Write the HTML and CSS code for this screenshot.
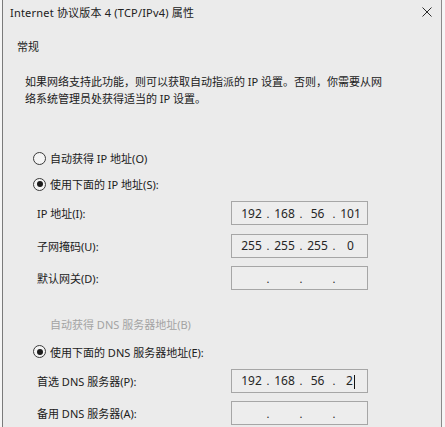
FILE: index.html
```html
<!DOCTYPE html>
<html lang="zh-CN">
  <head>
    <meta charset="utf-8">
    <title>Internet 协议版本 4 (TCP/IPv4) 属性</title>
    <link rel="stylesheet" href="styles.css">
  </head>
  <body>
    <div class="window">
      <div class="titlebar">
        <span class="title">Internet 协议版本 4 (TCP/IPv4) 属性</span>
        <svg class="close" width="10" height="10" viewBox="0 0 10 10">
          <path d="M0.5 0.5 L9.5 9.5 M9.5 0.5 L0.5 9.5" stroke="#2b2b2b" stroke-width="1" fill="none" />
        </svg>
      </div>

      <div class="tab">常规</div>

      <p class="intro">如果网络支持此功能，则可以获取自动指派的 IP 设置。否则，你需要从网<br>络系统管理员处获得适当的 IP 设置。</p>

      <div class="radio-row first">
        <span class="radio"></span>
        <span>自动获得 IP 地址(O)</span>
      </div>
      <div class="radio-row">
        <span class="radio checked"></span>
        <span>使用下面的 IP 地址(S):</span>
      </div>

      <div class="fields">
        <span>IP 地址(I):</span>
        <div class="ipbox">
          <span>192</span><span class="dot">.</span><span>168</span><span class="dot">.</span><span>56</span><span class="dot">.</span><span>101</span>
        </div>
        <span>子网掩码(U):</span>
        <div class="ipbox">
          <span>255</span><span class="dot">.</span><span>255</span><span class="dot">.</span><span>255</span><span class="dot">.</span><span>0</span>
        </div>
        <span>默认网关(D):</span>
        <div class="ipbox">
          <span></span><span class="dot">.</span><span></span><span class="dot">.</span><span></span><span class="dot">.</span><span></span>
        </div>
      </div>

      <div class="radio-row disabled">
        <span class="radio hidden"></span>
        <span>自动获得 DNS 服务器地址(B)</span>
      </div>
      <div class="radio-row">
        <span class="radio checked"></span>
        <span>使用下面的 DNS 服务器地址(E):</span>
      </div>

      <div class="fields">
        <span>首选 DNS 服务器(P):</span>
        <div class="ipbox">
          <span>192</span><span class="dot">.</span><span>168</span><span class="dot">.</span><span>56</span><span class="dot">.</span><span>2<i class="caret"></i></span>
        </div>
        <span>备用 DNS 服务器(A):</span>
        <div class="ipbox">
          <span></span><span class="dot">.</span><span></span><span class="dot">.</span><span></span><span class="dot">.</span><span></span>
        </div>
      </div>
    </div>
  </body>
</html>
```

FILE: styles.css
```css
body {
  margin: 0;
  background: #f5f5f5;
  font-family: "Noto Sans", "Noto Sans CJK SC", sans-serif;
  font-size: 11px;
  color: #202020;
  overflow: hidden;
}
.window {
  margin-left: 2px;
  width: 440px;
  height: 427px;
  box-sizing: border-box;
  border-left: 1px solid #7a7a7a;
  border-right: 1px solid #8a8a8a;
  background: #ebebeb;
  overflow: hidden;
}
.titlebar {
  height: 24px;
  display: flex;
  align-items: center;
  justify-content: space-between;
  padding: 0 9px 0 7px;
  letter-spacing: 0.2px;
}
.tab {
  margin-top: 12px;
  height: 22px;
  line-height: 22px;
  padding-left: 14px;
}
.intro {
  margin: 15px 0 0 22px;
  line-height: 17px;
  white-space: nowrap;
}
.radio-row {
  display: flex;
  align-items: center;
  gap: 4px;
  height: 26px;
  padding-left: 30px;
}
.radio-row.first {
  margin-top: 38px;
}
.radio-row.disabled {
  margin-top: 16px;
  margin-bottom: 2px;
  color: #a3a3a3;
}
.radio {
  position: relative;
  width: 11px;
  height: 11px;
  border: 1px solid #3a3a3a;
  border-radius: 50%;
  background: #f4f4f4;
}
.radio.checked::after {
  content: "";
  position: absolute;
  left: 2.5px;
  top: 2.5px;
  width: 6px;
  height: 6px;
  border-radius: 50%;
  background: #1c1c1c;
}
.radio.hidden {
  border-color: transparent;
  background: transparent;
}
.fields {
  display: grid;
  grid-template-columns: 194px 137px;
  grid-auto-rows: 32.5px;
  align-items: center;
  padding-left: 34px;
}
.ipbox {
  height: 24px;
  box-sizing: border-box;
  border: 1px solid #a6a6a6;
  background: #ededed;
  display: grid;
  grid-template-columns: 29px 4px 29px 4px 29px 4px 29px;
  align-items: center;
  padding-left: 5px;
  font-size: 12px;
  color: #262626;
  text-align: center;
}
.ipbox .dot {
  font-size: 11px;
}
.caret {
  display: inline-block;
  width: 1px;
  height: 14px;
  margin-left: 1px;
  background: #111;
  vertical-align: middle;
}
```
